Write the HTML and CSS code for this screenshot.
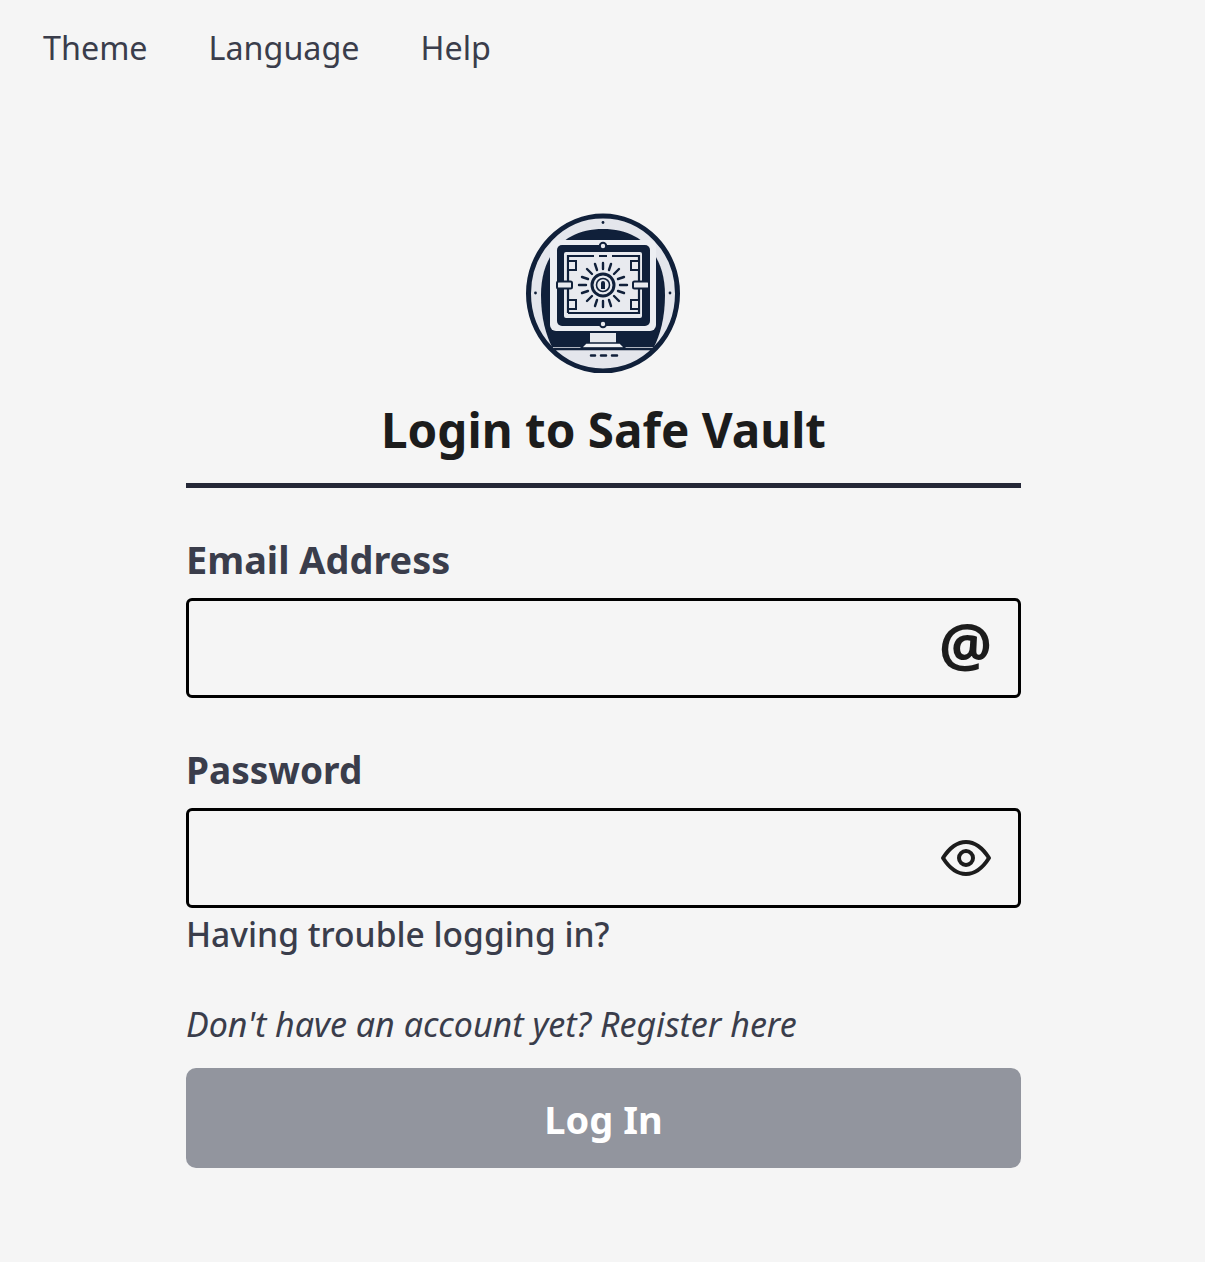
FILE: index.html
```html
<!DOCTYPE html>
<html lang="en">
<head>
<meta charset="utf-8">
<title>Login to Safe Vault</title>
<link rel="stylesheet" href="styles.css">
</head>
<body>
<nav class="nav">
  <a class="nav-item">Theme</a>
  <a class="nav-item">Language</a>
  <a class="nav-item">Help</a>
</nav>
<main class="login">
  <svg class="logo" viewBox="0 0 154 160" aria-label="Safe Vault logo">
    <ellipse cx="77" cy="80.500" rx="74.500" ry="77.500" fill="#e4e6ec" stroke="#10203a" stroke-width="5"/>
    <path d="M15 82 C15 40 40 16 77 16 C114 16 139 40 139 82 C139 105 134 122 128 134 H26 C20 122 15 105 15 82 Z" fill="#10203a"/>
    <rect x="24" y="27" width="106" height="91" rx="6" fill="#eceef2"/>
    <rect x="31" y="32" width="93" height="81" rx="5" fill="#10203a"/>
    <rect x="38" y="39" width="78" height="66" rx="2" fill="#e8eaef"/>
    <path d="M42 100 V43 H68 M73 43 H81 M86 43 H113 V100 H42" fill="none" stroke="#10203a" stroke-width="2.200"/>
    <g stroke="#10203a" stroke-width="2.400" stroke-linecap="round">
      <path d="M77 50 V56 M77 94 V88 M53 72 H60 M101 72 H94 M61 56 L66 61 M93 56 L88 61 M61 88 L66 83 M93 88 L88 83 M69 51 L71 57 M85 51 L83 57 M69 93 L71 87 M85 93 L83 87 M56 64 L62 66 M98 64 L92 66 M56 80 L62 78 M98 80 L92 78"/>
    </g>
    <circle cx="77" cy="72" r="11" fill="#e8eaef" stroke="#10203a" stroke-width="3"/>
    <circle cx="77" cy="72" r="6.500" fill="#e8eaef" stroke="#10203a" stroke-width="1.600"/>
    <path d="M75 76 V70 A2 2 0 0 1 79 70 V76 Z" fill="#10203a"/>
    <g fill="#e8eaef" stroke="#10203a" stroke-width="2">
      <rect x="31" y="68.500" width="15" height="7" rx="1.500"/>
      <rect x="107" y="68.500" width="16" height="7" rx="1.500"/>
      <rect x="42" y="48" width="8" height="9"/>
      <rect x="105" y="48" width="8" height="9"/>
      <rect x="42" y="87" width="8" height="9"/>
      <rect x="105" y="87" width="8" height="9"/>
      <circle cx="77" cy="33" r="3.200"/>
      <circle cx="77" cy="111" r="3.200"/>
    </g>
    <path d="M64 120 H90 V130 H64 Z" fill="#e6e8ed"/>
    <path d="M55 135 L60 130 H94 L99 135 Z" fill="#f2f3f6" stroke="#10203a" stroke-width="1.500"/>
    <path d="M28 136 H127" stroke="#10203a" stroke-width="2.500"/>
    <path d="M65 142.500 H69 M75 142.500 H80 M86 142.500 H91" stroke="#10203a" stroke-width="2.500" stroke-linecap="round"/>
    <circle cx="77" cy="9.500" r="1.400" fill="#10203a"/>
    <circle cx="9.500" cy="80" r="1.400" fill="#10203a"/>
    <circle cx="144" cy="80" r="1.400" fill="#10203a"/>
  </svg>
  <h1 class="title">Login to Safe Vault</h1>
  <form class="form">
    <label class="label" for="email">Email Address</label>
    <div class="field">
      <input class="input" id="email" type="text">
      <span class="at">@</span>
    </div>
    <label class="label label-password" for="password">Password</label>
    <div class="field">
      <input class="input" id="password" type="password">
      <svg class="eye" viewBox="0 0 52 40" fill="none" stroke="#1c1c1c" stroke-width="4">
        <path d="M3 20 C10 9 18 4 26 4 C34 4 42 9 49 20 C42 31 34 36 26 36 C18 36 10 31 3 20 Z" stroke-linejoin="round"/>
        <circle cx="26" cy="20" r="7"/>
      </svg>
    </div>
    <a class="trouble">Having trouble logging in?</a>
    <p class="register">Don't have an account yet? Register here</p>
    <button class="submit" type="button">Log In</button>
  </form>
</main>
</body>
</html>
```
FILE: styles.css
```css
* { box-sizing: border-box; }
html, body { margin: 0; }
body {
  min-height: 1262px;
  background: #f5f5f5;
  color: #3a3d4b;
  font-family: "Noto Sans", "Open Sans", sans-serif;
  font-size: 32.3px;
  overflow: hidden;
}
.nav {
  display: flex;
  gap: 61px;
  height: 94px;
  padding: 0 43px;
  align-items: center;
}
.nav-item { line-height: 44px; }
.login {
  width: 835px;
  margin: 119px auto 0 186px;
  display: flex;
  flex-direction: column;
  align-items: center;
}
.logo { width: 154px; height: 160px; display: block; margin-left: -1px; filter: blur(0.3px); }
.title {
  width: 100%;
  margin: 24px 0 0;
  padding-bottom: 21px;
  border-bottom: 5px solid #252837;
  text-align: center;
  color: #1c1c1c;
  font-size: 47.6px;
  line-height: 65px;
  font-weight: 700;
}
.form { width: 100%; display: flex; flex-direction: column; }
.label {
  margin-top: 48px;
  font-weight: 700;
  font-size: 37.9px;
  line-height: 46px;
  margin-bottom: 16px;
}
.label-password { margin-top: 49px; margin-bottom: 15px; font-size: 37px; }
.field { position: relative; height: 100px; }
.input {
  display: block;
  width: 100%;
  height: 100%;
  border: 3px solid #000;
  border-radius: 6px;
  background: transparent;
}
.at {
  position: absolute;
  right: 29px;
  top: 8px;
  color: #1c1c1c;
  font-size: 59px;
  line-height: 74px;
  font-weight: 700;
}
.eye { position: absolute; right: 29px; top: 30px; width: 52px; height: 40px; }
.trouble { line-height: 44px; margin-top: 4px; font-size: 33.6px; font-weight: 500; }
.register { margin: 46px 0 0; line-height: 44px; font-size: 34px; font-style: italic; }
.submit {
  height: 100px;
  margin-top: 22px;
  border: 0;
  border-radius: 10px;
  background: #92959e;
  color: #fff;
  font: 700 38px/100px "Noto Sans", sans-serif;
}
```
